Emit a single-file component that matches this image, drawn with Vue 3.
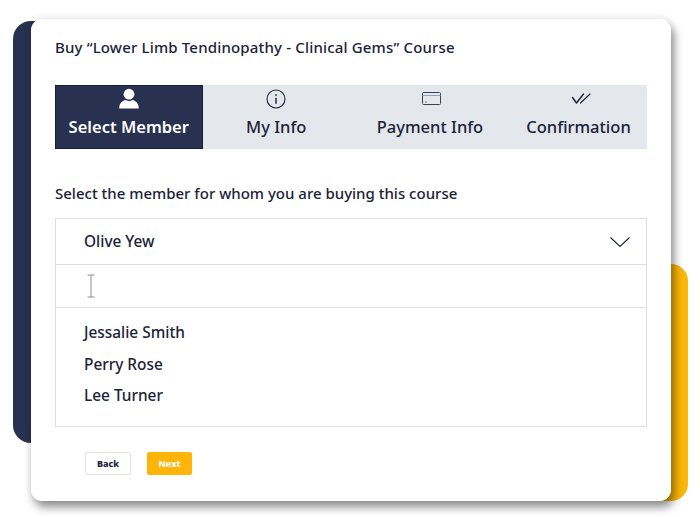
<script setup>
const steps = [
  { label: 'Select Member', icon: 'user', active: true },
  { label: 'My Info', icon: 'info' },
  { label: 'Payment Info', icon: 'card' },
  { label: 'Confirmation', icon: 'check' }
]
const members = ['Jessalie Smith', 'Perry Rose', 'Lee Turner']
</script>

<template>
  <div class="stage">
    <div class="deco navy"></div>
    <div class="deco gold"></div>
    <main class="card">
      <h1 class="title">Buy “Lower Limb Tendinopathy - Clinical Gems” Course</h1>
      <div class="steps">
        <div v-for="s in steps" :key="s.label" class="step" :class="['is-' + s.icon, { active: s.active }]">
          <svg class="icon" width="24" height="24" viewBox="0 0 24 24" fill="none">
            <g v-if="s.icon === 'user'" fill="#fff">
              <circle cx="12" cy="7.2" r="5.4" />
              <path d="M2.2 21.5c0-5.4 3.6-8 6.4-8.4 2 1.2 4.8 1.2 6.8 0 2.8.4 6.4 3 6.4 8.4z" />
            </g>
            <g v-else-if="s.icon === 'info'" stroke="#1b2238" stroke-width="1.1">
              <circle cx="12" cy="12" r="9" />
              <path d="M12 10.8v6" stroke-width="1.4" />
              <path d="M12 7.2v1.5" stroke-width="1.6" />
            </g>
            <g v-else-if="s.icon === 'card'" stroke="#3a4257" stroke-width="1">
              <rect x="2.5" y="5.5" width="18" height="12" rx="1" />
              <path d="M2.5 8.5h18" stroke="#9aa1ae" />
              <path d="M6 14.5v1" stroke-width="1.2" />
            </g>
            <g v-else stroke="#1b2238" stroke-width="1.4" stroke-linecap="round" stroke-linejoin="round">
              <path d="M3.5 10.5l4 5.5 7-9" />
              <path d="M11.5 16L21 7" stroke-width="1.2" />
            </g>
          </svg>
          <span class="label">{{ s.label }}</span>
        </div>
      </div>
      <p class="prompt">Select the member for whom you are buying this course</p>
      <div class="select">
        <div class="current">
          <span>Olive Yew</span>
          <svg width="22" height="12" viewBox="0 0 22 12" fill="none">
            <path d="M1.5 1.5L11 10.5l9.5-9" stroke="#1b2238" stroke-width="1.1" />
          </svg>
        </div>
        <div class="search">
          <svg width="8" height="24" viewBox="0 0 8 24" fill="none" stroke="#8c8c8c" stroke-width="1">
            <path d="M0.5 1h7M4 1v22M0.5 23h7" />
          </svg>
        </div>
        <ul class="options">
          <li v-for="m in members" :key="m">{{ m }}</li>
        </ul>
      </div>
      <div class="actions">
        <button class="btn back" type="button">Back</button>
        <button class="btn next" type="button">Next</button>
      </div>
    </main>
  </div>
</template>

<style>
html, body { margin: 0; background: #fff; overflow: hidden; }
</style>

<style scoped>
.stage {
  position: relative;
  width: 700px;
  height: 517px;
  padding: 19px 0 0 31px;
  box-sizing: border-box;
  overflow: hidden;
  font-family: "Noto Sans", "Open Sans", sans-serif;
  color: #1b2238;
}
.deco { position: absolute; }
.navy {
  left: 13px;
  top: 21px;
  width: 100px;
  height: 422px;
  background: #28314f;
  border-radius: 18px 0 0 18px;
}
.gold {
  left: 600px;
  top: 264px;
  width: 88px;
  height: 237px;
  background: #fbb608;
  border-radius: 0 17px 17px 0;
}
.card {
  position: relative;
  width: 640px;
  height: 482px;
  padding: 0 24px;
  box-sizing: border-box;
  background: #fff;
  border-radius: 11px;
  box-shadow: 3px 6px 10px rgba(0, 0, 0, 0.45), 0 -2px 10px rgba(0, 0, 0, 0.06);
}
.title {
  margin: 0;
  padding-top: 18px;
  height: 66px;
  box-sizing: border-box;
  font-size: 15px;
  line-height: 20px;
  letter-spacing: 0.17px;
  font-weight: 500;
}
.steps {
  display: grid;
  grid-template-columns: 147.5px 147.5px 160px 137px;
  height: 64px;
  background: #e4e8ed;
}
.step {
  display: flex;
  flex-direction: column;
  align-items: center;
  padding-top: 2px;
  box-sizing: border-box;
}
.step.active {
  background: #28314f;
  border: 1px solid #141c3c;
  padding-top: 1px;
  color: #fff;
}
.is-card .icon, .is-check .icon { transform: translateX(2px); }
.icon { display: block; }
.label {
  margin-top: 4px;
  font-size: 16.5px;
  line-height: 24px;
  font-weight: 500;
  white-space: nowrap;
}
.active .label { font-weight: 600; }
.prompt {
  margin: 34px 0 15px;
  font-size: 15px;
  line-height: 20px;
  font-weight: 500;
}
.select {
  height: 209px;
  box-sizing: border-box;
  border: 1px solid #dedede;
}
.current {
  display: flex;
  align-items: center;
  justify-content: space-between;
  height: 46px;
  padding: 0 15px 0 28px;
  box-sizing: border-box;
  border-bottom: 1px solid #dedede;
  font-size: 15.4px;
  font-weight: 500;
}
.search {
  display: flex;
  align-items: center;
  height: 43px;
  padding-left: 31px;
  box-sizing: border-box;
  border-bottom: 1px solid #dedede;
}
.options {
  margin: 0;
  padding: 9px 0 0 28px;
  list-style: none;
  font-size: 15.4px;
  font-weight: 500;
}
.options li {
  height: 31.5px;
  line-height: 31.5px;
}
.actions {
  display: flex;
  gap: 16px;
  padding: 25px 0 0 30px;
}
.btn {
  height: 23px;
  padding: 0;
  box-sizing: border-box;
  border-radius: 2px;
  font-family: inherit;
  font-size: 9px;
  font-weight: 800;
}
.back {
  width: 46px;
  background: #fff;
  border: 1px solid #e2e2e2;
  color: #1b2238;
}
.next {
  width: 45px;
  background: #ffb40a;
  border: 0;
  color: #fff;
}
</style>
